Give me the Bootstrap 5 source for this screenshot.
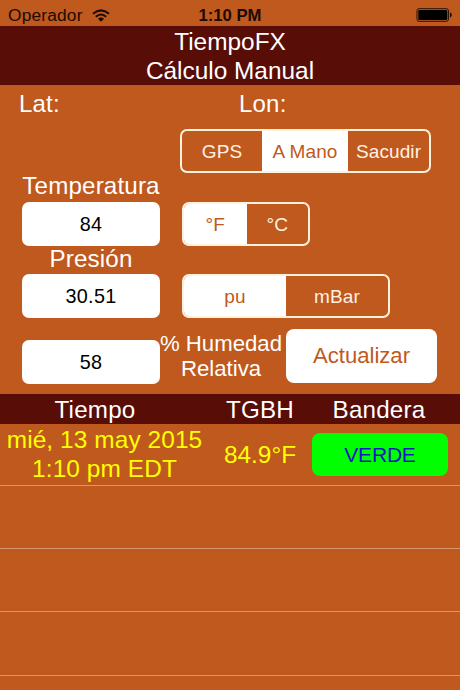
<!DOCTYPE html>
<html lang="es">
<head>
<meta charset="utf-8">
<meta name="viewport" content="width=device-width, initial-scale=1">
<title>TiempoFX</title>
<link href="https://cdn.jsdelivr.net/npm/bootstrap@5.3.0/dist/css/bootstrap.min.css" rel="stylesheet">
<style>
:root{--rust:#bf591d;--maroon:#580d07}
body{width:460px;height:690px;overflow:hidden;background:var(--rust);color:#fff;font-family:"Liberation Sans",Arial,sans-serif;font-size:24.4px;line-height:29px}
.status{height:26px;color:#1c0a02;font-size:17.3px;line-height:30px}
.status .carrier{width:102px;height:30px;letter-spacing:.2px}
.clock{font-size:16.7px;font-weight:700;line-height:31px}
.maroon{background:var(--maroon)}
.title{height:59px;line-height:28.5px;padding-top:2px}
.latlon{height:44px;line-height:37px;padding-left:19px;font-size:24px;letter-spacing:.2px}
.latlon span{width:220px}
.formrow{padding-left:22px}
.fieldcol{width:138px}
.label{height:29px;line-height:25px;font-size:24.2px;letter-spacing:.15px}
.label.short{height:28px;line-height:26px}
.field{height:44px;border-radius:7px;font-size:19.8px;line-height:44px;color:#000;background:#fff;letter-spacing:.3px}
.seg{height:44px;border:2px solid #fff1dc;border-radius:7px;overflow:hidden;font-size:19px}
.seg .btn{border:0;border-radius:0;padding:0;font-size:inherit;line-height:41px;color:#fff1e4;letter-spacing:.1px}
.seg .btn.active{background:#fff;color:var(--rust)}
.mode{width:251px;margin-left:180px}
.mode .gps{width:80px}
.mode .manual{width:86px}
.temp,.pres{margin-left:22px}
.temp{width:128px}
.pres{width:208px}
.temp .btn,.pres .btn{width:50%}
.temp .active{width:63px}
.last{height:55px;margin-top:11px}
.humid{width:126px;padding-top:2px;font-size:22.2px;line-height:25px}
.humid div{margin-left:-2px;margin-right:2px}
.update{width:151px;height:54px;border-radius:8px;background:#fff;color:var(--rust);font-size:22.1px;padding:0}
.heads{height:30px;margin-top:10px;font-size:24.2px;line-height:31px;letter-spacing:.2px}
.heads .c1{padding-right:28px}
.heads .c3{padding-right:4px}
.entry{height:63.2px;border-bottom:1px solid #d69672}
.entry.first{height:62px;color:#ff0}
.c1{width:218px}.c2{width:84px}.c3{width:158px}
.when{padding-right:9px;padding-bottom:2px;letter-spacing:.1px}
.flag{width:136px;height:43px;margin-left:10px;border-radius:8px;background:#0f0;color:#1414c8;font-size:21px;line-height:44px;letter-spacing:-.2px}
</style>
</head>
<body>
<header>
  <div class="status d-flex position-relative">
    <div class="carrier d-flex align-items-center justify-content-between ms-2 text-nowrap"><span>Operador</span>
      <svg width="18" height="13" viewBox="0 0 18 13"><g fill="none" stroke="#1c0a02" stroke-width="2"><path d="M1 4.7Q9-2 17 4.7"/><path d="M3.8 7.7Q9 3.2 14.2 7.7"/></g><path d="M6 9.8Q9 7.4 12 9.8L9 12.8Z" fill="#1c0a02"/></svg>
    </div>
    <div class="clock text-center position-absolute w-100">1:10 PM</div>
    <svg class="ms-auto me-2 mt-2" width="37" height="14" viewBox="0 0 37 14"><rect x="2" y=".7" width="31.5" height="12.6" rx="2" fill="none" stroke="#2b1003"/><rect x="3.3" y="2" width="29" height="10" rx="1" fill="#000"/><path d="M35 4.6Q36.8 5 36.8 7T35 9.4Z" fill="#1c0a02"/></svg>
  </div>
  <div class="title maroon text-center">TiempoFX<br>Cálculo Manual</div>
</header>
<main>
  <div class="latlon d-flex"><span>Lat:</span><span>Lon:</span></div>
  <div class="mode seg d-flex">
    <button class="btn gps">GPS</button><button class="btn manual active">A Mano</button><button class="btn flex-fill">Sacudir</button>
  </div>
  <div class="formrow"><div class="label fieldcol text-center">Temperatura</div></div>
  <div class="formrow d-flex">
    <div class="field fieldcol text-center">84</div>
    <div class="seg temp d-flex"><button class="btn active">°F</button><button class="btn">°C</button></div>
  </div>
  <div class="formrow"><div class="label short fieldcol text-center">Presión</div></div>
  <div class="formrow d-flex">
    <div class="field fieldcol text-center">30.51</div>
    <div class="seg pres d-flex"><button class="btn active">pu</button><button class="btn">mBar</button></div>
  </div>
  <div class="formrow d-flex last">
    <div class="field fieldcol text-center align-self-end">58</div>
    <div class="humid text-center text-nowrap"><div>% Humedad<br>Relativa</div></div>
    <button class="btn update">Actualizar</button>
  </div>
</main>
<section>
  <div class="heads maroon d-flex text-center"><div class="c1">Tiempo</div><div class="c2">TGBH</div><div class="c3">Bandera</div></div>
  <div class="entry first d-flex align-items-center text-center">
    <div class="c1 when">mié, 13 may 2015<br>1:10 pm EDT</div><div class="c2 text-nowrap">84.9°F</div><div class="c3"><div class="flag">VERDE</div></div>
  </div>
  <div class="entry"></div><div class="entry"></div><div class="entry"></div>
</section>
<script src="https://cdn.jsdelivr.net/npm/bootstrap@5.3.0/dist/js/bootstrap.bundle.min.js"></script>
</body>
</html>
